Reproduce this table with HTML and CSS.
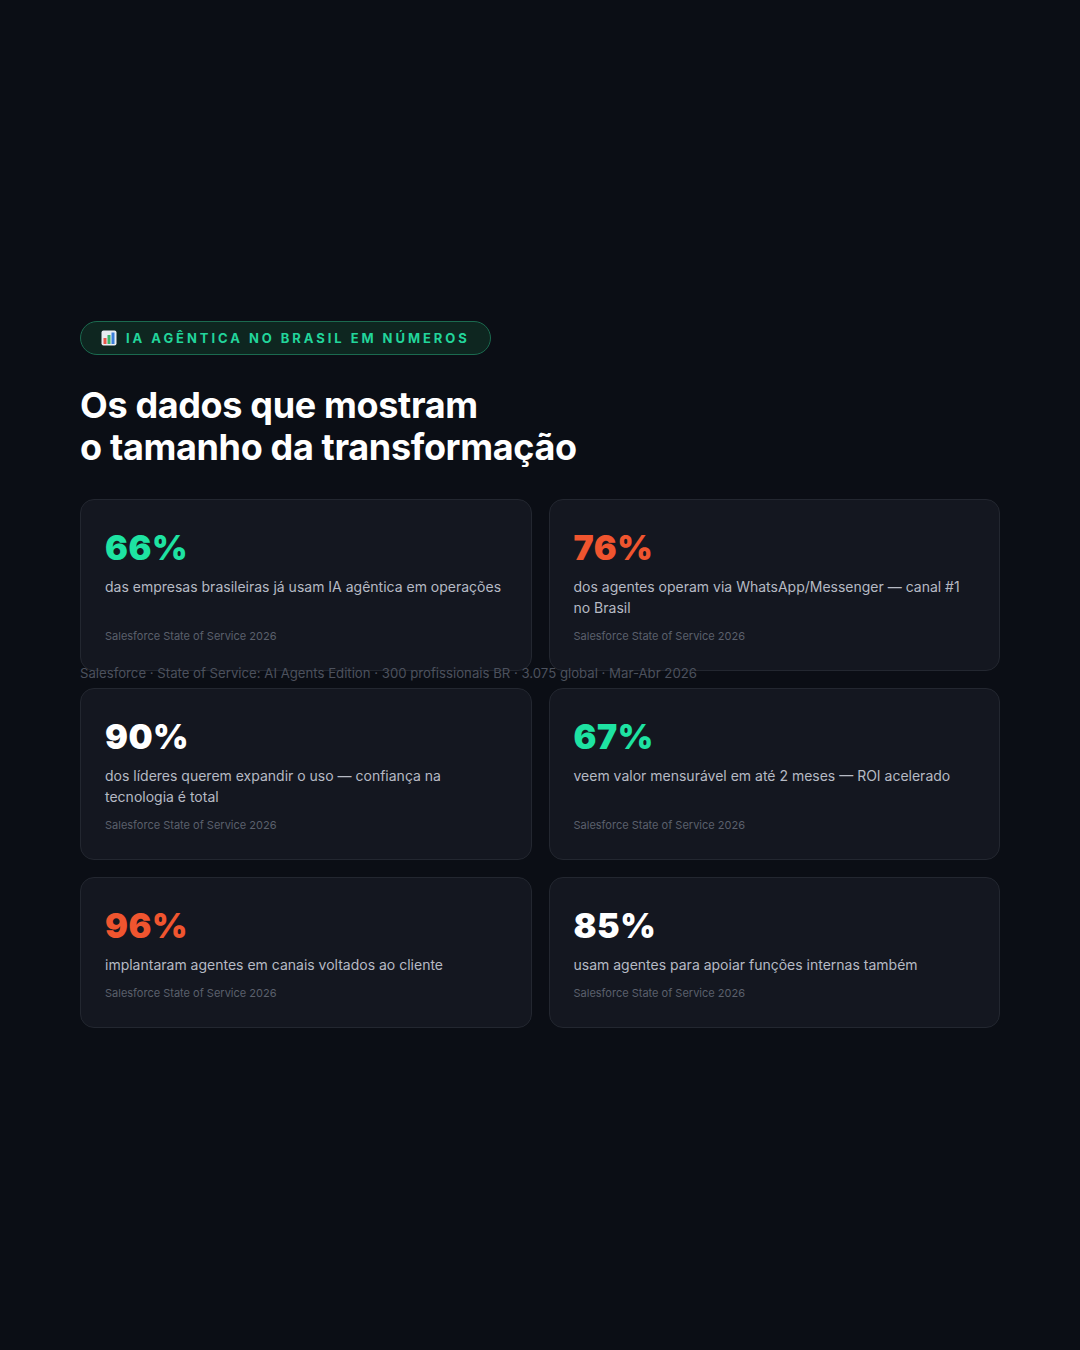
FILE: index.html
```html
<!DOCTYPE html>
<html lang="pt-BR">
<head>
<meta charset="utf-8">
<title>IA Agêntica no Brasil em números</title>
<link rel="stylesheet" href="styles.css">
</head>
<body>
<main class="page">
  <div class="badge">
    <svg class="badge-icon" width="16" height="16" viewBox="0 0 16 16" aria-hidden="true">
      <rect x="0.5" y="0.5" width="15" height="15" rx="2" fill="#e9edf2"/>
      <rect x="2.5" y="8" width="3" height="6" fill="#e8574a"/>
      <rect x="6.5" y="5" width="3" height="9" fill="#3bb56a"/>
      <rect x="10.5" y="2.5" width="3" height="11.5" fill="#3b7fd9"/>
    </svg>
    <span class="badge-text">IA AGÊNTICA NO BRASIL EM NÚMEROS</span>
  </div>
  <h1 class="title">Os dados que mostram<br>o tamanho da transformação</h1>
  <section class="grid">
    <article class="card">
      <div class="num green">66%</div>
      <p class="desc">das empresas brasileiras já usam IA agêntica em operações</p>
      <p class="src">Salesforce State of Service 2026</p>
    </article>
    <article class="card">
      <div class="num orange">76%</div>
      <p class="desc">dos agentes operam via WhatsApp/Messenger — canal #1 no Brasil</p>
      <p class="src">Salesforce State of Service 2026</p>
    </article>
    <article class="card">
      <div class="num white">90%</div>
      <p class="desc">dos líderes querem expandir o uso — confiança na tecnologia é total</p>
      <p class="src">Salesforce State of Service 2026</p>
    </article>
    <article class="card">
      <div class="num green">67%</div>
      <p class="desc">veem valor mensurável em até 2 meses — ROI acelerado</p>
      <p class="src">Salesforce State of Service 2026</p>
    </article>
    <article class="card">
      <div class="num orange">96%</div>
      <p class="desc">implantaram agentes em canais voltados ao cliente</p>
      <p class="src">Salesforce State of Service 2026</p>
    </article>
    <article class="card">
      <div class="num white">85%</div>
      <p class="desc">usam agentes para apoiar funções internas também</p>
      <p class="src">Salesforce State of Service 2026</p>
    </article>
  </section>
  <p class="footnote">Salesforce · State of Service: AI Agents Edition · 300 profissionais BR · 3.075 global · Mar-Abr 2026</p>
</main>
</body>
</html>
```

FILE: styles.css
```css
html, body {
  margin: 0;
  padding: 0;
  background: #0b0e15;
}
body {
  font-family: "Inter", "Noto Sans", sans-serif;
  color: #ffffff;
  width: 1080px;
  height: 1350px;
  overflow: hidden;
}
.page {
  box-sizing: border-box;
  padding: 321px 80px 0 80px;
  display: flex;
  flex-direction: column;
  align-items: flex-start;
}
.badge {
  box-sizing: border-box;
  height: 34px;
  display: flex;
  align-items: center;
  gap: 9px;
  padding: 0 20px 0 20px;
  border: 1px solid #1b6a4f;
  border-radius: 17px;
  background: #0e2620;
}
.badge-icon {
  display: block;
  flex: none;
}
.badge-text {
  font-size: 13px;
  font-weight: 700;
  letter-spacing: 2.95px;
  color: #22d59b;
  line-height: 1;
}
.title {
  margin: 29px 0 0 0;
  font-size: 36px;
  line-height: 42px;
  font-weight: 700;
  letter-spacing: -0.35px;
  color: #ffffff;
}
.grid {
  margin-top: 31px;
  width: 920px;
  height: 165px;
  display: grid;
  grid-template-columns: 1fr 1fr;
  gap: 17px;
}
.card {
  box-sizing: border-box;
  display: flex;
  flex-direction: column;
  padding: 28px 24px 26px 24px;
  background: #141720;
  border: 1px solid #232730;
  border-radius: 14px;
}
.num {
  font-size: 34px;
  line-height: 40px;
  font-weight: 900;
  letter-spacing: 0.5px;
}
.green { color: #1ee3a2; }
.orange { color: #f0552f; }
.white { color: #ffffff; }
.desc {
  margin: 8px 0 0 0;
  font-size: 14px;
  line-height: 21px;
  color: #b6bac4;
}
.src {
  margin: auto 0 0 0;
  padding-top: 10px;
  font-size: 11px;
  line-height: 16px;
  color: #5b606c;
}
.footnote {
  margin: 0;
  font-size: 13.2px;
  line-height: 18px;
  color: #4c515d;
}
```
